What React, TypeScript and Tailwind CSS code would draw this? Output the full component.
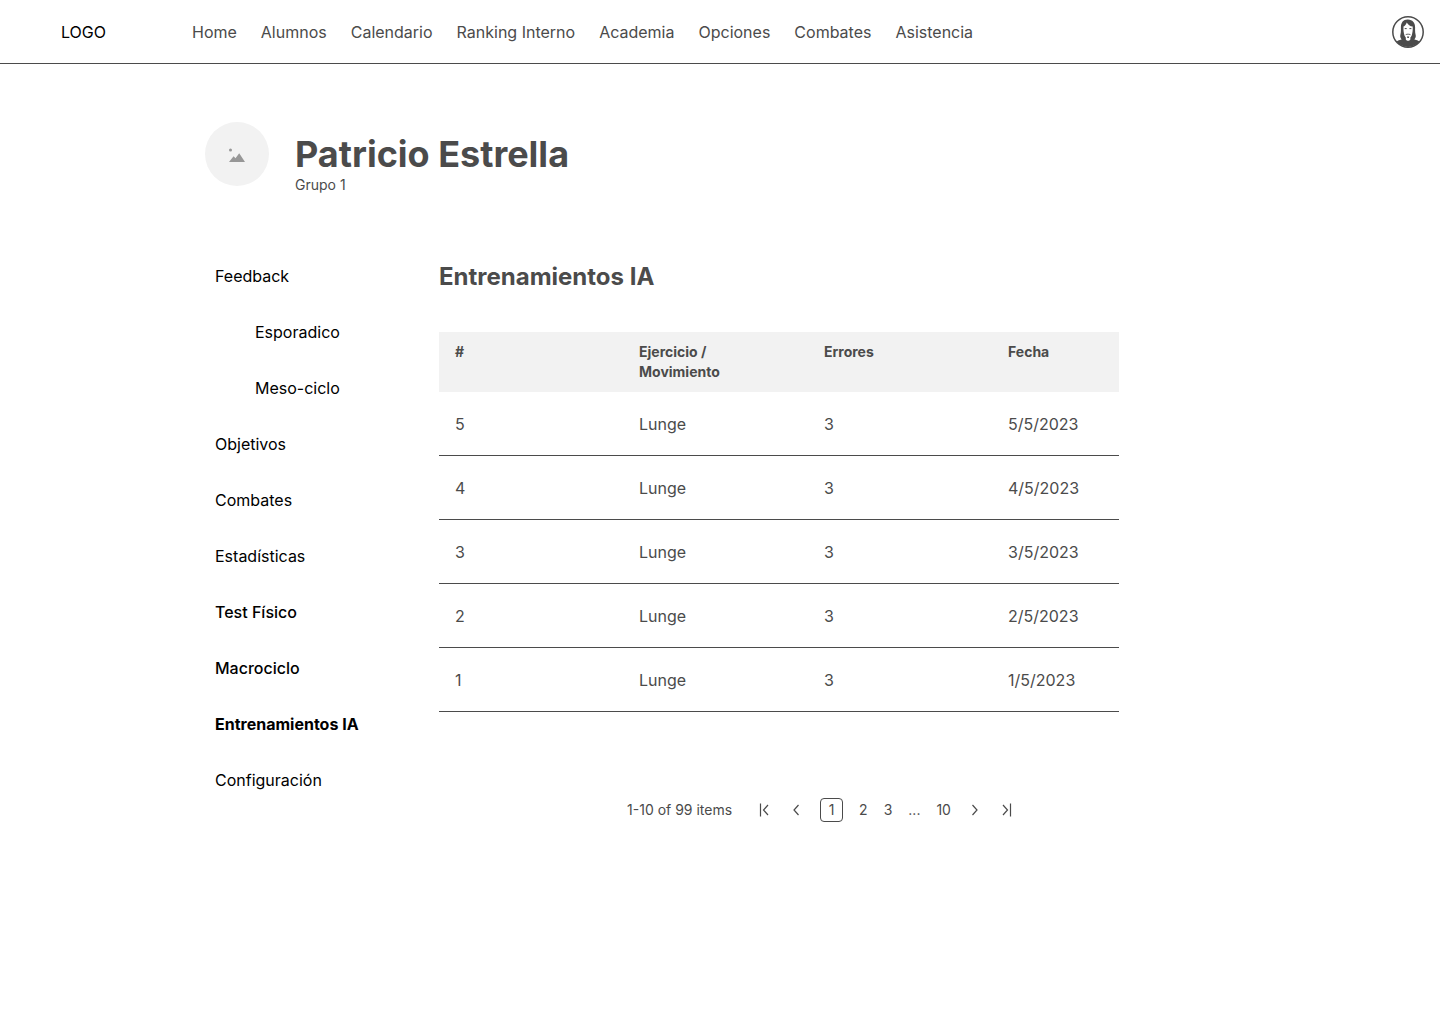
import { useState } from 'react';

const navItems = ['Home', 'Alumnos', 'Calendario', 'Ranking Interno', 'Academia', 'Opciones', 'Combates', 'Asistencia'];

const sideItems = [
  { label: 'Feedback', style: 'font-normal' },
  { label: 'Esporadico', style: 'pl-10 font-normal' },
  { label: 'Meso-ciclo', style: 'pl-10 font-normal' },
  { label: 'Objetivos', style: 'font-normal' },
  { label: 'Combates', style: 'font-normal' },
  { label: 'Estadísticas', style: 'font-normal' },
  { label: 'Test Físico', style: 'font-medium' },
  { label: 'Macrociclo', style: 'font-medium' },
  { label: 'Entrenamientos IA', style: 'font-bold' },
  { label: 'Configuración', style: 'font-normal' },
];

const rows = [5, 4, 3, 2, 1].map((n) => ({ id: n, exercise: 'Lunge', errors: 3, date: `${n}/5/2023` }));

function Avatar() {
  return (
    <svg viewBox="0 0 32 32" className="size-8" aria-hidden="true">
      <defs>
        <clipPath id="avatar-disc">
          <circle cx="16" cy="16" r="15" />
        </clipPath>
      </defs>
      <circle cx="16" cy="16" r="15.2" fill="#fff" stroke="#4b4b4b" strokeWidth="1.5" />
      <g clipPath="url(#avatar-disc)">
        <path
          d="M16 3.600C11.500 3.300 9 6.500 8.900 11c0 3.500 .2 5.500-.6 8.200c-.3 1.600 .3 3 1.300 4.200C7 24 5 24.700 3.500 26.500L8 33h16l4.500-6.500c-1.500-1.800-3.500-2.500-6.100-3.100c1-1.200 1.600-2.600 1.300-4.200c-.8-2.700-.6-4.700-.6-8.200C23 6.500 20.500 3.900 16 3.600z"
          fill="#4b4b4b"
        />
        <path
          d="M14.800 6.400c-.6 1.900-1.900 3.200-3.300 4.200c-.2 3.400 .1 6.300 1 8.800c.3 .8 .8 1.500 1.300 2v2c.6 .9 1.300 1.300 2.300 1.300s1.700-.4 2.300-1.300v-2c.5-.5 1-1.200 1.300-2c.9-2.500 1.200-5.400 1-8.800c-2.600-.4-4.700-1.800-5.900-4.200z"
          fill="#fff"
        />
        <path d="M12.700 12.600h2M17.400 12.600h2" fill="none" stroke="#4b4b4b" strokeWidth="1" />
        <path
          d="M13.200 19.300c.5-1.300 1.500-1.800 2.900-1.600c1.400-.2 2.400 .3 2.900 1.600c-1-.6-1.900-.7-2.900-.7s-1.900 .1-2.900 .7z"
          fill="#4b4b4b"
        />
        <path d="M15 20.400h2.200l-.4 1.500h-1.400z" fill="#4b4b4b" />
      </g>
    </svg>
  );
}

function PagerIcon({ d }: { d: string }) {
  return (
    <svg viewBox="0 0 16 16" className="size-4" fill="none" stroke="#4b4b4b" strokeWidth="1.2" aria-hidden="true">
      <path d={d} />
    </svg>
  );
}

export default function App() {
  const [page, setPage] = useState(1);
  const pageClass = (n: number) =>
    n === page ? 'h-6 min-w-[23px] rounded border border-[#4b4b4b] px-1' : 'h-6';

  return (
    <div className="min-h-screen bg-white font-['Inter',sans-serif] text-base text-[#4b4b4b]">
      <header className="flex h-16 items-center border-b border-[#4b4b4b] pr-4">
        <a href="#" className="w-48 shrink-0 pl-[61px] text-black">LOGO</a>
        <nav aria-label="Principal" className="flex gap-6 whitespace-nowrap">
          {navItems.map((item) => (
            <a key={item} href="#">{item}</a>
          ))}
        </nav>
        <button type="button" aria-label="Perfil" className="ml-auto shrink-0">
          <Avatar />
        </button>
      </header>

      <main className="px-[205px] pt-[58px]">
        <div className="flex items-start gap-[26px]">
          <div className="flex size-16 shrink-0 items-center justify-center rounded-full bg-[#f2f2f2]">
            <svg viewBox="0 0 16 16" className="size-4" fill="#979797" aria-hidden="true">
              <circle cx="1.500" cy="4" r="1.500" />
              <path d="M0 16L4.600 10.200L6.500 12.300L10.200 7.200L16 16z" />
            </svg>
          </div>
          <div className="pt-2">
            <h1 className="text-[36px] leading-12 font-bold">Patricio Estrella</h1>
            <p className="text-sm leading-[14px]">Grupo 1</p>
          </div>
        </div>

        <div className="flex items-start pt-15 pl-[10px]">
          <nav aria-label="Alumno" className="flex w-56 shrink-0 flex-col gap-8 pt-3 text-black">
            {sideItems.map(({ label, style }) => (
              <a key={label} href="#" className={style}>{label}</a>
            ))}
          </nav>

          <section className="w-full max-w-[680px]">
            <h2 className="pt-2 text-2xl leading-[34px] font-bold">Entrenamientos IA</h2>
            <table className="mt-[38px] w-full table-fixed border-separate border-spacing-0 text-left">
              <thead>
                <tr className="bg-[#f2f2f2] align-top text-sm leading-5">
                  <th className="w-[184px] px-4 py-[10px] font-bold">#</th>
                  <th className="w-[185px] py-[10px] pr-16 pl-4 font-bold">Ejercicio / Movimiento</th>
                  <th className="w-[184px] px-4 py-[10px] font-bold">Errores</th>
                  <th className="px-4 py-[10px] font-bold">Fecha</th>
                </tr>
              </thead>
              <tbody>
                {rows.map((row) => (
                  <tr key={row.id} className="h-16">
                    <td className="border-b border-[#4b4b4b] px-4">{row.id}</td>
                    <td className="border-b border-[#4b4b4b] px-4">{row.exercise}</td>
                    <td className="border-b border-[#4b4b4b] px-4">{row.errors}</td>
                    <td className="border-b border-[#4b4b4b] px-4">{row.date}</td>
                  </tr>
                ))}
              </tbody>
            </table>

            <nav aria-label="Paginación" className="flex items-center justify-center gap-4 pt-[86px] pl-[84px] text-sm">
              <span className="pr-2">1-10 of 99 items</span>
              <button type="button" aria-label="Primera página">
                <PagerIcon d="M4.500 1.500v13M12 3L7.500 8L12 13" />
              </button>
              <button type="button" aria-label="Página anterior">
                <PagerIcon d="M10.500 3L6 8L10.500 13" />
              </button>
              <button type="button" className={pageClass(1)} onClick={() => setPage(1)}>1</button>
              <button type="button" className={pageClass(2)} onClick={() => setPage(2)}>2</button>
              <button type="button" className={pageClass(3)} onClick={() => setPage(3)}>3</button>
              <span>...</span>
              <button type="button" className={pageClass(10)} onClick={() => setPage(10)}>10</button>
              <button type="button" aria-label="Página siguiente">
                <PagerIcon d="M5.500 3L10 8L5.500 13" />
              </button>
              <button type="button" aria-label="Última página">
                <PagerIcon d="M4 3L8.500 8L4 13M11.500 1.500v13" />
              </button>
            </nav>
          </section>
        </div>
      </main>
    </div>
  );
}
